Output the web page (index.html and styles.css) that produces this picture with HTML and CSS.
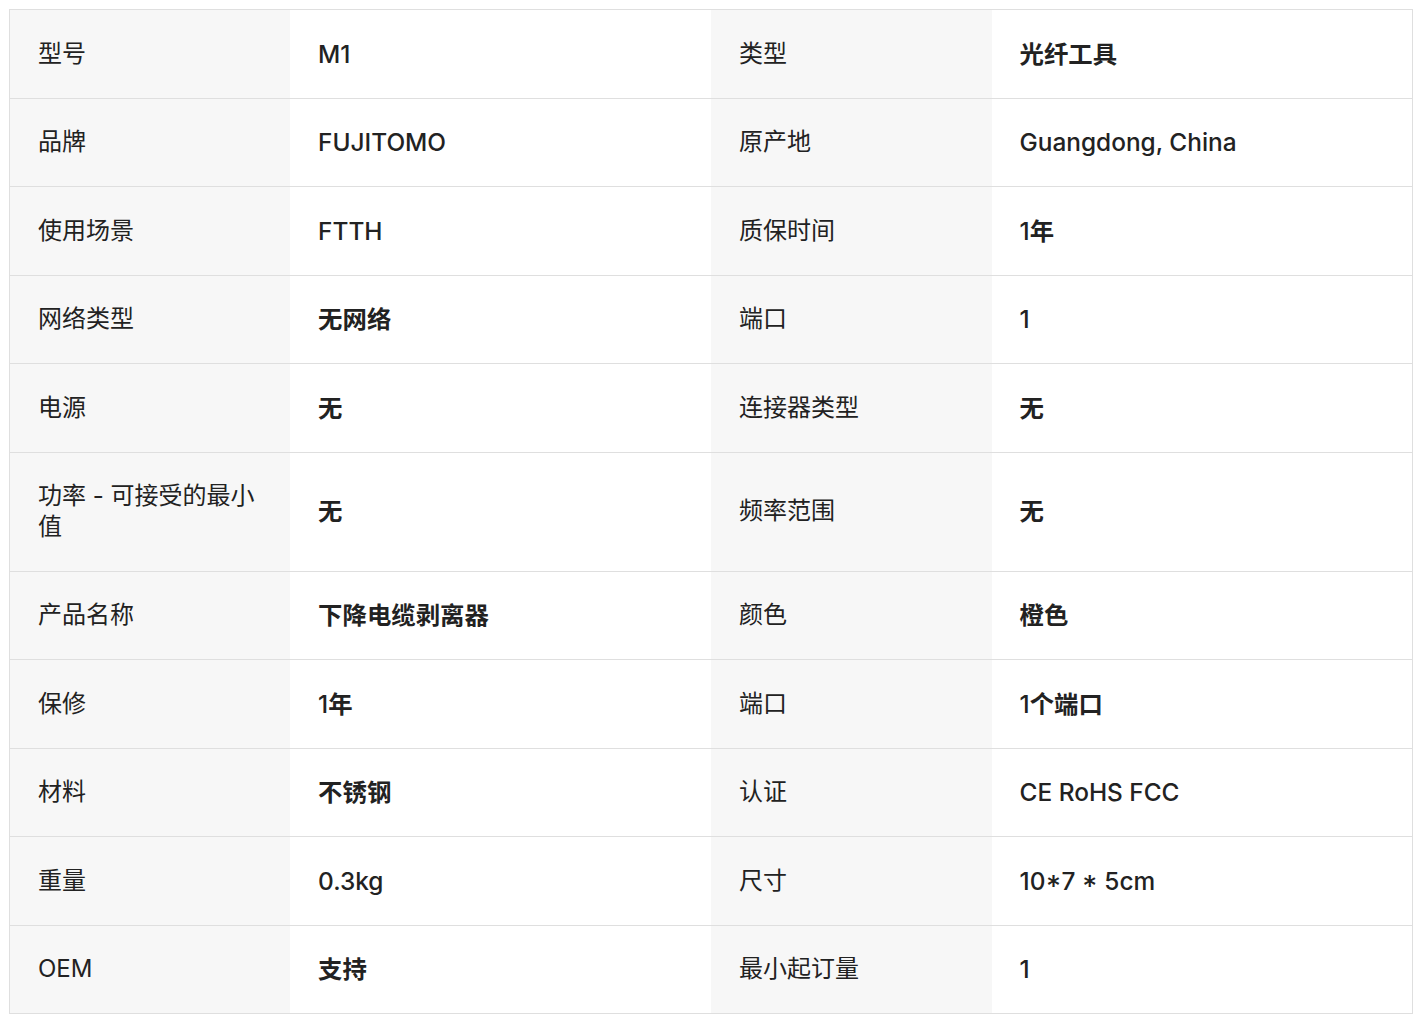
FILE: index.html
```html
<!DOCTYPE html>
<html lang="zh-CN">
<head>
<meta charset="utf-8">
<title>产品参数</title>
<link rel="stylesheet" href="styles.css">
</head>
<body>
<div class="wrap">
<table class="spec">
  <colgroup>
    <col class="c-label"><col class="c-value"><col class="c-label"><col class="c-value">
  </colgroup>
  <tbody>
    <tr><th>型号</th><td>M1</td><th>类型</th><td><b>光纤工具</b></td></tr>
    <tr><th>品牌</th><td>FUJITOMO</td><th>原产地</th><td>Guangdong, China</td></tr>
    <tr><th>使用场景</th><td>FTTH</td><th>质保时间</th><td>1<b>年</b></td></tr>
    <tr><th>网络类型</th><td><b>无网络</b></td><th>端口</th><td>1</td></tr>
    <tr><th>电源</th><td><b>无</b></td><th>连接器类型</th><td><b>无</b></td></tr>
    <tr><th>功率 - 可接受的最小值</th><td><b>无</b></td><th>频率范围</th><td><b>无</b></td></tr>
    <tr><th>产品名称</th><td><b>下降电缆剥离器</b></td><th>颜色</th><td><b>橙色</b></td></tr>
    <tr><th>保修</th><td>1<b>年</b></td><th>端口</th><td>1<b>个端口</b></td></tr>
    <tr><th>材料</th><td><b>不锈钢</b></td><th>认证</th><td>CE RoHS FCC</td></tr>
    <tr><th>重量</th><td>0.3kg</td><th>尺寸</th><td>10*7 * 5cm</td></tr>
    <tr><th>OEM</th><td><b>支持</b></td><th>最小起订量</th><td>1</td></tr>
  </tbody>
</table>
</div>
</body>
</html>
```

FILE: styles.css
```css
html, body {
  margin: 0;
  padding: 0;
  background: #ffffff;
}
.wrap {
  padding: 9px 8px 0 9px;
}
.spec {
  width: 100%;
  border-collapse: collapse;
  table-layout: fixed;
  font-family: Inter, "Noto Sans CJK SC", sans-serif;
  font-size: 24px;
  line-height: 30.5px;
  color: #222222;
  border: 1px solid #dfdfdf;
}
.c-label { width: 20%; }
.c-value { width: 30%; }
.spec th,
.spec td {
  padding: 28.5px 28px;
  border-bottom: 1px solid #dfdfdf;
  text-align: left;
  vertical-align: middle;
  word-break: break-all;
}
.spec th {
  background: #f7f7f7;
  font-weight: 400;
  color: #222222;
}
.spec td {
  background: #ffffff;
  font-weight: 500;
  font-size: 24.4px;
}
.spec td b {
  font-weight: 700;
}
```
